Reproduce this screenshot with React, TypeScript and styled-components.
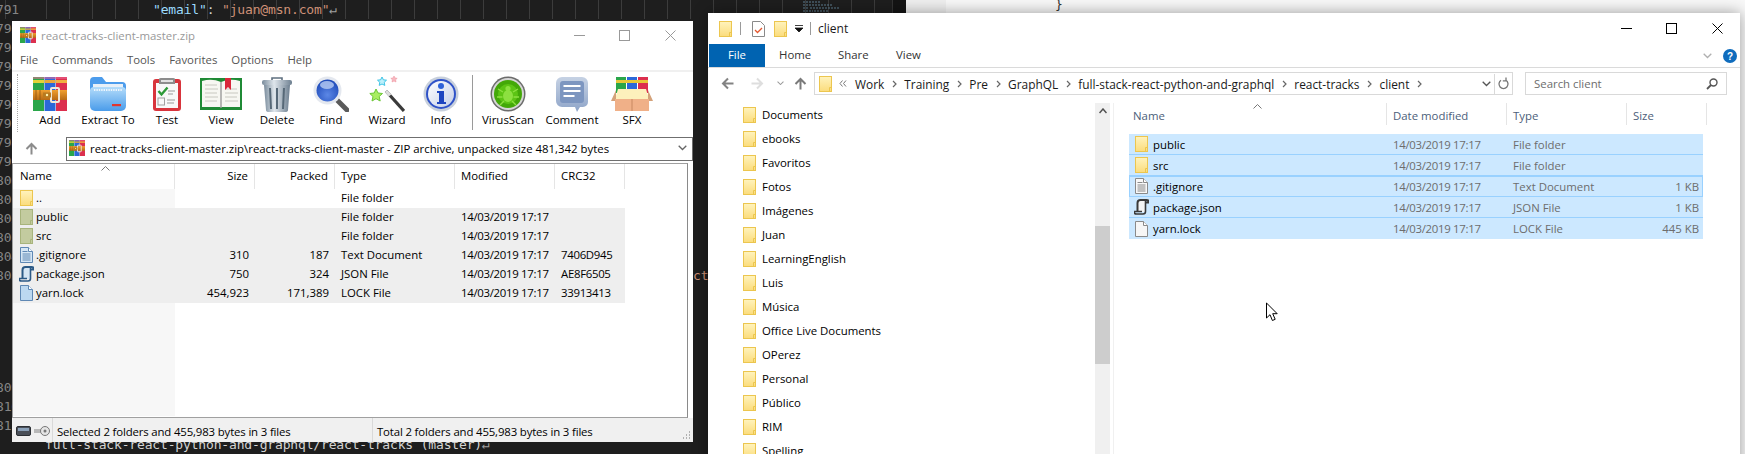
import React from "react";
import styled, { createGlobalStyle } from "styled-components";

const UI = `"Open Sans", "Noto Sans", "Liberation Sans", sans-serif`;
const MONO = `"DejaVu Sans Mono", "Liberation Mono", monospace`;

const Global = createGlobalStyle`
  html, body { margin: 0; padding: 0; background: #1e1e1e; }
  #root { width: 1745px; height: 454px; }
`;

/* ---------- desktop and the editors behind the windows ---------- */
const Desktop = styled.div`
  position: relative;
  width: 1745px;
  height: 454px;
  overflow: hidden;
  display: flex;
  font-family: ${UI};
`;
const DefsHolder = styled.svg`
  position: absolute;
`;
const DarkEditor = styled.div`
  position: relative;
  width: 892px;
  flex: none;
  background: #1e1e1e;
  display: flex;
  flex-direction: column;
  font-family: ${MONO};
  font-size: 13px;
  letter-spacing: -0.16px;
`;
const CodeRow = styled.div<{ $guides?: boolean }>`
  height: 19px;
  line-height: 19px;
  display: flex;
  white-space: pre;
  ${(p) =>
    p.$guides
      ? `background-image: repeating-linear-gradient(90deg, transparent 0, transparent 22px, #3c3c3c 22px, #3c3c3c 23px);
         background-position: 24px 0;`
      : ""}
`;
const LineNo = styled.span`
  width: 40px;
  flex: none;
  color: #858585;
  text-indent: -4px;
  overflow: hidden;
`;
const Code = styled.span<{ $indent: number; $tone?: string }>`
  margin-left: ${(p) => p.$indent}px;
  color: ${(p) => p.$tone || "#d4d4d4"};
`;
const Key = styled.span`color: #9cdcfe;`;
const Str = styled.span`color: #ce9178;`;
const Mark = styled.span`color: #a0a0a0;`;
const Minimap = styled.svg`
  position: absolute;
  left: 803px;
  top: 0;
`;
const EdgeBar = styled.div`
  width: 14px;
  flex: none;
  background: #141414;
  border-left: 1px solid #333;
  box-sizing: border-box;
`;
const LightEditor = styled.div`
  flex: 1;
  display: flex;
  background: #f8f8f8;
`;
const LightGutter = styled.div`
  width: 40px;
  background: #efefef;
`;
const Brace = styled.div`
  margin-left: 109px;
  font-family: ${MONO};
  font-size: 13px;
  line-height: 9px;
  color: #333;
`;

/* ---------- WinRAR window ---------- */
const RarWindow = styled.div`
  position: absolute;
  left: 12px;
  top: 21px;
  width: 681px;
  height: 421px;
  background: #fff;
  display: flex;
  flex-direction: column;
  font-size: 11.4px;
  color: #000;
`;
const RarTitle = styled.div`
  height: 28px;
  flex: none;
  display: flex;
  align-items: center;
  padding: 0 0 0 8px;
  gap: 5px;
  color: #999;
`;
const WinControls = styled.div`
  margin-left: auto;
  display: flex;
  align-items: center;
`;
const CtlBtn = styled.span<{ $w: number }>`
  width: ${(p) => p.$w}px;
  display: flex;
  justify-content: center;
`;
const MenuBar = styled.div`
  height: 21px;
  flex: none;
  display: flex;
  align-items: center;
  gap: 14px;
  padding-left: 8px;
  color: #555;
`;
const RarToolbar = styled.div`
  height: 62px;
  flex: none;
  border-top: 2px solid #f0f0f0;
  display: flex;
`;
const Gripper = styled.div<{ $left: number; $right: number }>`
  width: 0;
  margin: 2px ${(p) => p.$right}px 2px ${(p) => p.$left}px;
  border-left: 1px dotted #a8a8a8;
`;
const ToolBtn = styled.div<{ $w: number }>`
  width: ${(p) => p.$w}px;
  flex: none;
  display: flex;
  flex-direction: column;
  align-items: center;
  padding-top: 4px;
  white-space: nowrap;
  line-height: 16px;
  font-size: 11.5px;
`;
const ToolIcon = styled.div`
  height: 36px;
  display: flex;
  align-items: center;
`;
const ToolSep = styled.div`
  width: 1px;
  margin: 3px 9px 4px 10px;
  background: #9a9a9a;
`;
const AddressRow = styled.div`
  height: 29px;
  flex: none;
  display: flex;
  align-items: center;
`;
const UpCell = styled.div`
  width: 43px;
  margin-left: 5px;
  flex: none;
  display: flex;
  justify-content: flex-start;
  padding-left: 8px;
  box-sizing: border-box;
`;
const AddressBox = styled.div`
  flex: 1;
  margin-left: 6px;
  height: 24px;
  box-sizing: border-box;
  border: 1px solid #6f6f6f;
  display: flex;
  align-items: center;
  gap: 5px;
  padding: 0 3px 1px 2px;
  white-space: nowrap;
`;
const Chevron = styled.span`
  margin-left: auto;
  display: flex;
  padding-right: 2px;
`;
const RarList = styled.div`
  width: 676px;
  flex: 1;
  min-height: 0;
  box-sizing: border-box;
  border: 1px solid #a0a0a0;
  border-right-color: #8a8a8a;
  display: flex;
  flex-direction: column;
`;
const RarHead = styled.div`
  position: relative;
  height: 25px;
  flex: none;
  display: flex;
  align-items: stretch;
`;
const RarHeadCell = styled.div<{ $w: number; $right?: boolean; $pad?: number }>`
  width: ${(p) => p.$w}px;
  flex: none;
  box-sizing: border-box;
  border-right: 1px solid #e5e5e5;
  display: flex;
  align-items: center;
  justify-content: ${(p) => (p.$right ? "flex-end" : "flex-start")};
  padding: 0 6px 2px;
  padding-left: ${(p) => (p.$pad !== undefined ? p.$pad : 6)}px;
`;
const Caret = styled.svg<{ $x: number; $y: number }>`
  position: absolute;
  left: ${(p) => p.$x}px;
  top: ${(p) => p.$y}px;
`;
const RarBody = styled.div`
  flex: 1;
  margin-bottom: 1px;
  background: linear-gradient(90deg, #f7f7f7 162px, #fff 162px);
`;
const RarRow = styled.div<{ $sel?: boolean }>`
  width: 612px;
  height: 19px;
  display: flex;
  background: ${(p) => (p.$sel ? "#eeeeee" : "transparent")};
`;
const RarCell = styled.div<{ $w: number; $right?: boolean; $tight?: boolean }>`
  width: ${(p) => p.$w}px;
  flex: none;
  box-sizing: border-box;
  padding: 0 6px 2px;
  display: flex;
  align-items: center;
  gap: 3px;
  white-space: nowrap;
  justify-content: ${(p) => (p.$right ? "flex-end" : "flex-start")};
  ${(p) => (p.$tight ? "letter-spacing: -0.3px;" : "")}
`;
const RarNameCell = styled(RarCell)`
  padding-left: 7px;
`;
const StatusBar = styled.div`
  height: 24px;
  flex: none;
  background: #f0f0f0;
  display: flex;
  align-items: center;
`;
const StatusCell = styled.div<{ $w: number; $last?: boolean }>`
  width: ${(p) => p.$w}px;
  flex: none;
  box-sizing: border-box;
  height: 100%;
  display: flex;
  align-items: center;
  gap: 3px;
  padding: 2px 0 0 4px;
  border-right: ${(p) => (p.$last ? "none" : "1px solid #d9d9d9")};
  white-space: nowrap;
  letter-spacing: -0.15px;
`;
const Grip = styled.svg`
  margin-left: auto;
  align-self: flex-end;
  margin-right: 2px;
  margin-bottom: 2px;
`;

/* ---------- Explorer window ---------- */
const ExpWindow = styled.div`
  position: absolute;
  left: 708px;
  top: 13px;
  width: 1032px;
  height: 460px;
  background: #fff;
  box-shadow: 0 0 14px rgba(0, 0, 0, 0.38);
  display: flex;
  flex-direction: column;
  font-size: 11.4px;
  color: #000;
`;
const ExpTitle = styled.div`
  height: 31px;
  flex: none;
  display: flex;
  align-items: center;
  padding-left: 11px;
`;
const TitleSep = styled.span<{ $l: number; $r: number }>`
  width: 1px;
  height: 13px;
  background: #9a9a9a;
  margin: 0 ${(p) => p.$r}px 0 ${(p) => p.$l}px;
`;
const TitleGap = styled.span`
  width: 9px;
`;
const TitleText = styled.span`
  color: #1a1a1a;
  font-size: 12px;
`;
const QuickArrow = styled.svg`
  margin-left: 8px;
`;
const RibbonTabs = styled.div`
  height: 24px;
  flex: none;
  box-sizing: border-box;
  display: flex;
  align-items: stretch;
  padding-left: 1px;
  border-bottom: 1px solid #dadada;
`;
const FileTab = styled.div`
  width: 56px;
  display: flex;
  align-items: center;
  justify-content: center;
  padding-bottom: 2px;
  box-sizing: border-box;
  background: #0063b1;
  color: #fff;
`;
const RibbonTab = styled.div<{ $w: number; $pad: number }>`
  width: ${(p) => p.$w}px;
  padding: 0 0 2px ${(p) => p.$pad}px;
  box-sizing: border-box;
  display: flex;
  align-items: center;
  color: #333;
`;
const RibbonRight = styled.div`
  margin-left: auto;
  display: flex;
  align-items: center;
  gap: 11px;
  padding-right: 3px;
`;
const NavRow = styled.div`
  height: 35px;
  flex: none;
  display: flex;
  align-items: center;
  padding: 0 12px 5px 13px;
  box-sizing: border-box;
`;
const NavBtn = styled.span<{ $gap: number }>`
  display: flex;
  margin-right: ${(p) => p.$gap}px;
`;
const Breadcrumb = styled.div`
  width: 699px;
  height: 23px;
  box-sizing: border-box;
  border: 1px solid #d9d9d9;
  display: flex;
  align-items: center;
  padding: 1px 0 0 4px;
  white-space: nowrap;
  color: #1a1a1a;
  font-size: 11.9px;
`;
const CrumbSep = styled.span<{ $l?: number; $r?: number }>`
  display: flex;
  margin: 0 ${(p) => p.$r ?? 7.5}px 0 ${(p) => p.$l ?? 7.5}px;
`;
const CrumbEnd = styled.div`
  margin-left: auto;
  display: flex;
  align-items: center;
  height: 100%;
`;
const CrumbRefresh = styled.span`
  height: 100%;
  width: 17px;
  margin-left: 3px;
  border-left: 1px solid #d9d9d9;
  display: flex;
  align-items: center;
  justify-content: center;
`;
const SearchBox = styled.div`
  margin-left: 12px;
  width: 202px;
  height: 23px;
  box-sizing: border-box;
  border: 1px solid #d9d9d9;
  display: flex;
  align-items: center;
  justify-content: space-between;
  padding: 1px 8px 0;
  color: #6d6d6d;
`;
const ExpBody = styled.div`
  flex: 1;
  min-height: 0;
  display: flex;
`;
const Tree = styled.div`
  width: 387px;
  flex: none;
  padding-left: 35px;
  box-sizing: border-box;
  overflow: hidden;
`;
const TreeRow = styled.div`
  height: 24px;
  display: flex;
  align-items: center;
  gap: 6px;
  white-space: nowrap;
  padding-bottom: 1px;
  box-sizing: border-box;
`;
const ScrollTrack = styled.div`
  width: 15px;
  flex: none;
  background: #f0f0f0;
  display: flex;
  flex-direction: column;
  align-items: center;
`;
const ScrollArrow = styled.svg`
  margin-top: 5px;
  margin-bottom: 6px;
  flex: none;
`;
const ScrollThumb = styled.div`
  width: 100%;
  height: 138px;
  margin-top: 106px;
  background: #cdcdcd;
`;
const FilePane = styled.div`
  flex: 1;
  margin-left: 3px;
  border-left: 1px solid #f0f0f0;
`;
const ExpHead = styled.div`
  position: relative;
  height: 22px;
  margin-left: 13px;
  display: flex;
  color: #4c607a;
`;
const ExpHeadCell = styled.div<{ $w: number }>`
  width: ${(p) => p.$w}px;
  flex: none;
  box-sizing: border-box;
  border-right: 1px solid #e5e5e5;
  padding: 3px 0 0 6px;
  display: flex;
  align-items: center;
`;
const ExpRows = styled.div`
  margin: 9px 0 0 15px;
  width: 574px;
`;
const ExpRow = styled.div<{ $focus?: boolean; $last?: boolean }>`
  height: 21px;
  box-sizing: border-box;
  background: #cce8ff;
  display: flex;
  border-bottom: ${(p) => (p.$last ? "none" : "1px solid #99d1ff")};
  ${(p) => (p.$focus ? "outline: 1px solid #99d1ff; outline-offset: -1px;" : "")}
`;
const ExpName = styled.div`
  width: 258px;
  flex: none;
  box-sizing: border-box;
  display: flex;
  align-items: center;
  gap: 5px;
  padding-left: 6px;
  white-space: nowrap;
`;
const ExpCol = styled.div<{ $w: number; $right?: boolean; $tight?: boolean }>`
  width: ${(p) => p.$w}px;
  flex: none;
  box-sizing: border-box;
  padding: 0 4px 0 6px;
  display: flex;
  align-items: center;
  white-space: nowrap;
  color: #6d6d6d;
  justify-content: ${(p) => (p.$right ? "flex-end" : "flex-start")};
  ${(p) => (p.$tight ? "letter-spacing: -0.3px;" : "")}
`;
const Pointer = styled.svg`
  position: absolute;
  left: 1265px;
  top: 302px;
`;
const IconSvg = styled.svg<{ $nudge?: boolean }>`
  flex: none;
  ${(p) => (p.$nudge ? "margin-left: -1px; margin-right: -1px;" : "")}
`;
const TurnSvg = styled.svg<{ $turn: number }>`
  transform: rotate(${(p) => p.$turn}deg);
`;

/* ---------- drawings ---------- */
const Folder = ({ dim }: { dim?: boolean }) => (
  <IconSvg width="13" height="16" viewBox="0 0 13 16">
    <rect x=".5" y=".5" width="12" height="15" fill={dim ? "#c3cb9f" : "url(#fy)"} stroke={dim ? "#a8b47c" : "#ecc64f"} />
    <path d="M10.5 15.5v-4h2" fill="none" stroke={dim ? "#a8b47c" : "#ecc64f"} />
  </IconSvg>
);
const RarLogo = ({ size = 34 }: { size?: number }) => (
  <svg width={size} height={size} viewBox="0 0 34 34">
    <rect x="0" y="0" width="11" height="34" fill="#2aa64a" />
    <rect x="11.5" y="0" width="11" height="34" fill="#2b68d8" />
    <rect x="23" y="0" width="11" height="34" fill="#dc2f4e" />
    <rect x="0" y="3" width="11" height="3" fill="#e4d238" />
    <rect x="11.5" y="3" width="11" height="3" fill="#e8a73a" />
    <rect x="23" y="3" width="11" height="3" fill="#f0b040" />
    <rect x="0" y="0" width="34" height="2" fill="#e96a96" opacity=".55" />
    <rect x="-1" y="13" width="36" height="10" fill="url(#belt)" />
    <path d="M3 13v10M7 13v10" stroke="#8c5410" strokeWidth=".8" />
    <rect x="18" y="11" width="8" height="14" rx="1" fill="none" stroke="#efe8d8" strokeWidth="2" />
    <rect x="10" y="15.5" width="8" height="5" fill="#b87a20" />
    <circle cx="14" cy="18" r="1.2" fill="#fff4b0" />
  </svg>
);
const ExtractIcon = () => (
  <svg width="36" height="34" viewBox="0 0 36 34">
    <path d="M0 4a4 4 0 0 1 4-4h8l4 5h16a4 4 0 0 1 4 4v4H0z" fill="#4c9cec" />
    <rect x="3" y="7" width="30" height="5" fill="#e8f0f8" />
    <path d="M0 14q0-4 4-4h28q4 0 4 4v15a5 5 0 0 1-5 5H5a5 5 0 0 1-5-5z" fill="url(#fb)" />
    <path d="M4 13h28" stroke="#ffffff" strokeWidth="2" strokeDasharray="1.4 1" opacity=".8" />
    <rect x="22" y="27" width="9" height="2.2" fill="#e2362e" />
  </svg>
);
const TestIcon = () => (
  <svg width="28" height="33" viewBox="0 0 28 33">
    <rect x="0" y="1" width="28" height="32" rx="3" fill="#d8343c" />
    <rect x="3" y="5" width="22" height="25" fill="#f8f8f8" />
    <path d="M6 1q0-1 2-1h12q2 0 2 1v5H6z" fill="#8d8d8d" />
    <rect x="8" y="2" width="12" height="2" fill="#e2e2e2" />
    <path d="M5.5 13l3 3.5 6-7" fill="none" stroke="#2d9a38" strokeWidth="2.4" />
    <rect x="5" y="20" width="6.5" height="7" fill="none" stroke="#a0a0a0" />
    <path d="M15 13h7M15 16h5M14 22h8M14 25h7" stroke="#999" strokeWidth="1.2" />
  </svg>
);
const ViewIcon = () => (
  <svg width="42" height="32" viewBox="0 0 42 32">
    <rect x="0" y="0" width="42" height="32" fill="#1f8a35" />
    <path d="M2 3q10-3 19 1q9-4 19-1v26H2z" fill="#f7f7f2" />
    <path d="M21 4v26" stroke="#9a9a9a" strokeWidth="1.4" />
    <path d="M5 7h12M5 11h13M5 15h12M5 19h13M5 23h12M25 11h12M25 15h13M25 19h12M25 23h13" stroke="#c8c8c0" />
    <path d="M25 0h6v12l-3-3-3 3z" fill="#d8283a" />
  </svg>
);
const TrashIcon = () => (
  <svg width="30" height="35" viewBox="0 0 30 35">
    <path d="M10 3V1h10v2" fill="none" stroke="#5f7080" strokeWidth="1.6" />
    <rect x="0" y="3" width="30" height="5" rx="2" fill="url(#tg)" />
    <path d="M2 8h26l-2 25q0 2-3 2H7q-3 0-3-2z" fill="url(#tg)" />
    <path d="M8 11l1 21M15 11v21M22 11l-1 21" stroke="#566877" strokeWidth="2" />
  </svg>
);
const FindIcon = () => (
  <svg width="36" height="36" viewBox="0 0 36 36">
    <path d="M24 24l10 10" stroke="#5a5a5a" strokeWidth="5" strokeLinecap="round" />
    <circle cx="14.5" cy="14.5" r="14" fill="#e4e8ef" />
    <circle cx="14.5" cy="14.5" r="11" fill="url(#fd)" />
    <ellipse cx="14" cy="9" rx="7" ry="4" fill="#b9cdf4" opacity=".8" />
  </svg>
);
const WizardIcon = () => (
  <svg width="36" height="36" viewBox="0 0 36 36">
    <path d="M17 15l18 20" stroke="#3a3a3a" strokeWidth="3.2" />
    <path d="M17 15l4 4.5" stroke="#dddddd" strokeWidth="3.2" />
    <path d="M7 13l2 4 4.5.5-3.3 3 1 4.5L7 22.7 3 25l1-4.5-3.2-3 4.4-.5z" fill="#a8ee60" stroke="#6cc638" />
    <path d="M13 1l1.4 2.8 3.1.4-2.3 2.1.6 3.1L13 8l-2.8 1.4.6-3.1-2.3-2.1 3.1-.4z" fill="#bdf0fb" stroke="#3ec4e6" />
    <path d="M25 0l1 2 2.2.3-1.6 1.5.4 2.2-2-1-2 1 .4-2.2-1.6-1.5 2.2-.3z" fill="#f7b8c0" stroke="#ec8c98" strokeWidth=".5" />
  </svg>
);
const InfoIcon = () => (
  <svg width="36" height="36" viewBox="0 0 36 36">
    <circle cx="18" cy="18" r="17.5" fill="#c8d0dc" />
    <circle cx="18" cy="18" r="15" fill="#2f52c8" />
    <circle cx="18" cy="18" r="13" fill="url(#ig)" />
    <circle cx="18" cy="10" r="3" fill="#2f62d8" />
    <path d="M14 15h7v11h2v2h-9v-2h2v-9h-2z" fill="#1e45c0" />
  </svg>
);
const VirusIcon = () => (
  <svg width="36" height="36" viewBox="0 0 36 36">
    <circle cx="18" cy="18" r="17.5" fill="#6c6c6c" />
    <circle cx="18" cy="18" r="16" fill="#d6d6d6" />
    <circle cx="18" cy="18" r="14" fill="#43a808" />
    <circle cx="18" cy="18" r="10" fill="#5cc414" />
    <ellipse cx="18" cy="20" rx="5" ry="6" fill="#8ce040" />
    <circle cx="18" cy="12.5" r="2.6" fill="#8ce040" />
    <path d="M13 16l-5-3M23 16l5-3M12.5 21H7M23.5 21H29M14 25l-4 4M22 25l4 4" stroke="#8ce040" strokeWidth="1.4" />
  </svg>
);
const CommentIcon = () => (
  <svg width="32" height="36" viewBox="0 0 32 36">
    <path d="M6 1h20a6 6 0 0 1 6 6v19a5 5 0 0 1-5 5h-3l-3 5-2-5H6a6 6 0 0 1-6-6V7a6 6 0 0 1 6-6z" fill="url(#cg)" />
    <rect x="4" y="5" width="24" height="22" rx="3" fill="#7d96c0" />
    <path d="M7.500 10h17M7.500 15h17M7.500 20h11" stroke="#fff" strokeWidth="1.8" />
  </svg>
);
const SfxIcon = () => (
  <svg width="42" height="34" viewBox="0 0 42 34">
    <rect x="5" y="0" width="10" height="16" fill="#2aa64a" />
    <rect x="16" y="0" width="10" height="16" fill="#2b68d8" />
    <rect x="27" y="0" width="10" height="16" fill="#dc2f4e" />
    <rect x="5" y="3" width="32" height="3" fill="#e8c838" />
    <path d="M7 12h28l3 10H4z" fill="#fdf0bc" />
    <path d="M5 13L0 24h5zM37 13l5 11h-5z" fill="#d4a27a" />
    <path d="M4 22h34v12H4z" fill="#f0b088" />
    <path d="M21 22v12" stroke="#c88860" />
  </svg>
);
const DocIcon = ({ tone }: { tone: "blue" | "gray" }) => {
  const line = tone === "blue" ? "#5f88b4" : "#8a8a8a";
  const fill = tone === "blue" ? "#d6e6f4" : "#f8f8f8";
  return (
    <IconSvg width="13" height="16" viewBox="0 0 13 16">
      <path d="M.5.5h8l4 4v11H.5z" fill={fill} stroke={line} />
      <path d="M8.5.5v4h4" fill="#fff" stroke={line} />
      <path d="M2.500 4.500h5M2.500 7h8M2.500 9h8M2.500 11h8M2.500 13h8" stroke={line} />
    </IconSvg>
  );
};
const PlainIcon = ({ tone }: { tone: "blue" | "gray" }) => {
  const line = tone === "blue" ? "#5f88b4" : "#8a8a8a";
  const fill = tone === "blue" ? "#bcd8f0" : "#f6f6f6";
  return (
    <IconSvg width="13" height="16" viewBox="0 0 13 16">
      <path d="M.5.5h8l4 4v11H.5z" fill={fill} stroke={line} />
      <path d="M8.5.5v4h4" fill="#fff" stroke={line} />
    </IconSvg>
  );
};
const JsonIcon = ({ tone, paper }: { tone: string; paper: string }) => (
  <IconSvg $nudge width="15" height="16" viewBox="0 0 15 16">
    <rect x="4" y="2" width="8" height="11" fill={paper} />
    <path d="M3.500 13V4q0-3 3-3h6q2.500 0 2.500 2.500h-3" fill="none" stroke={tone} strokeWidth="2" />
    <path d="M11.500 2v10.500q0 2.500-2.500 2.500H2.500Q0 15 0 12.500h8" fill="none" stroke={tone} strokeWidth="1.600" />
  </IconSvg>
);
const DriveIcon = () => (
  <svg width="15" height="10" viewBox="0 0 15 10">
    <rect x=".5" y=".5" width="14" height="9" rx="1.500" fill="#4a4f58" stroke="#2c2f34" />
    <rect x="2" y="2" width="11" height="3" fill="#8aa0b8" />
  </svg>
);
const KeysIcon = () => (
  <svg width="16" height="12" viewBox="0 0 16 12">
    <path d="M0 4h8v4H0z" fill="#b8b8b8" />
    <circle cx="11" cy="6" r="4.500" fill="#e4e4e4" stroke="#777" />
    <circle cx="11" cy="6" r="1.500" fill="#777" />
  </svg>
);
const Arrow = ({ dir, color = "#838383", w = 13 }: { dir: "left" | "right" | "up"; color?: string; w?: number }) => (
  <TurnSvg $turn={dir === "left" ? 0 : dir === "right" ? 180 : 90} width={w} height={w} viewBox="0 0 13 13">
    <path d="M12.500 6.500H2M7 1.500l-5 5 5 5" fill="none" stroke={color} strokeWidth="2" />
  </TurnSvg>
);
const ChevDown = ({ color = "#666", w = 9 }: { color?: string; w?: number }) => (
  <svg width={w} height={(w * 6) / 9} viewBox="0 0 9 6">
    <path d="M.7.7l3.800 3.800L8.300.7" fill="none" stroke={color} strokeWidth="1.300" />
  </svg>
);
const ChevRight = () => (
  <svg width="5" height="8" viewBox="0 0 5 8">
    <path d="M1 1l3 3-3 3" fill="none" stroke="#666" strokeWidth="1.200" />
  </svg>
);

const columns = { name: 162, size: 80, packed: 80, type: 120, mod: 100, crc: 70 };

const tools: { label: string; w: number; icon: React.ReactNode }[] = [
  { label: "Add", w: 56, icon: <RarLogo /> },
  { label: "Extract To", w: 60, icon: <ExtractIcon /> },
  { label: "Test", w: 58, icon: <TestIcon /> },
  { label: "View", w: 50, icon: <ViewIcon /> },
  { label: "Delete", w: 62, icon: <TrashIcon /> },
  { label: "Find", w: 46, icon: <FindIcon /> },
  { label: "Wizard", w: 66, icon: <WizardIcon /> },
  { label: "Info", w: 42, icon: <InfoIcon /> },
];
const tools2: { label: string; w: number; icon: React.ReactNode }[] = [
  { label: "VirusScan", w: 52, icon: <VirusIcon /> },
  { label: "Comment", w: 76, icon: <CommentIcon /> },
  { label: "SFX", w: 44, icon: <SfxIcon /> },
];

const D = "14/03/2019 17:17";
const rarRows = [
  { icon: <Folder />, name: "..", type: "File folder" },
  { sel: true, icon: <Folder dim />, name: "public", type: "File folder", mod: D },
  { sel: true, icon: <Folder dim />, name: "src", type: "File folder", mod: D },
  { sel: true, icon: <DocIcon tone="blue" />, name: ".gitignore", size: "310", packed: "187", type: "Text Document", mod: D, crc: "7406D945" },
  { sel: true, icon: <JsonIcon tone="#2c5a86" paper="#d6e6f4" />, name: "package.json", size: "750", packed: "324", type: "JSON File", mod: D, crc: "AE8F6505" },
  { sel: true, icon: <PlainIcon tone="blue" />, name: "yarn.lock", size: "454,923", packed: "171,389", type: "LOCK File", mod: D, crc: "33913413" },
];
const expRows = [
  { icon: <Folder />, name: "public", type: "File folder" },
  { icon: <Folder />, name: "src", type: "File folder" },
  { icon: <DocIcon tone="gray" />, name: ".gitignore", type: "Text Document", size: "1 KB", focus: true },
  { icon: <JsonIcon tone="#3a3a3a" paper="#f4f4f4" />, name: "package.json", type: "JSON File", size: "1 KB" },
  { icon: <PlainIcon tone="gray" />, name: "yarn.lock", type: "LOCK File", size: "445 KB" },
];
const treeItems = [
  "Documents", "ebooks", "Favoritos", "Fotos", "Imágenes", "Juan", "LearningEnglish", "Luis", "Música",
  "Office Live Documents", "OPerez", "Personal", "Público", "RIM", "Spelling",
];
const crumbs = ["Work", "Training", "Pre", "GraphQL", "full-stack-react-python-and-graphql", "react-tracks", "client"];
const lineNumbers = [
  "791", "792", "793", "794", "795", "796", "797", "798", "799",
  "800", "801", "802", "803", "804", "805", "", "", "", "", "", "809", "810", "811", "",
];

export default function App() {
  return (
    <Desktop>
      <Global />
      <DefsHolder width="0" height="0">
        <defs>
          <linearGradient id="fy" x1="0" y1="0" x2="0" y2="1">
            <stop offset="0" stopColor="#fff3bd" />
            <stop offset="1" stopColor="#fbdc7c" />
          </linearGradient>
          <linearGradient id="fb" x1="0" y1="0" x2="0" y2="1">
            <stop offset="0" stopColor="#b4dcfa" />
            <stop offset="1" stopColor="#4a9cea" />
          </linearGradient>
          <linearGradient id="belt" x1="0" y1="0" x2="0" y2="1">
            <stop offset="0" stopColor="#f0a030" />
            <stop offset="1" stopColor="#b86a14" />
          </linearGradient>
          <linearGradient id="tg" x1="0" y1="0" x2="1" y2="0">
            <stop offset="0" stopColor="#7a8c9c" />
            <stop offset=".4" stopColor="#dfe6ec" />
            <stop offset="1" stopColor="#6d7f90" />
          </linearGradient>
          <radialGradient id="fd" cx=".5" cy=".7" r=".7">
            <stop offset="0" stopColor="#5c88e6" />
            <stop offset="1" stopColor="#1d49b8" />
          </radialGradient>
          <linearGradient id="ig" x1="0" y1="0" x2="1" y2="1">
            <stop offset="0" stopColor="#ffffff" />
            <stop offset="1" stopColor="#c4cee8" />
          </linearGradient>
          <linearGradient id="cg" x1="0" y1="0" x2="0" y2="1">
            <stop offset="0" stopColor="#c6d2e4" />
            <stop offset="1" stopColor="#8ea4c8" />
          </linearGradient>
        </defs>
      </DefsHolder>

      <DarkEditor>
        {lineNumbers.map((n, i) => (
          <CodeRow key={i} $guides={i === 0}>
            <LineNo>{n}</LineNo>
            {i === 0 && (
              <Code $indent={113}>
                <Key>"email"</Key>: <Str>"juan@msn.com"</Str>
                <Mark>↵</Mark>
              </Code>
            )}
            {i === 14 && (
              <Code $indent={653} $tone="#ce9178">
                ct
              </Code>
            )}
            {i === 23 && (
              <Code $indent={5}>
                full-stack-react-python-and-graphql/react-tracks (master)<Mark>↵</Mark>
              </Code>
            )}
          </CodeRow>
        ))}
        <Minimap width="48" height="13" viewBox="0 0 48 13">
          <path d="M0 2h5M6 2h12M0 5h8M9 5h20M0 8h6M7 8h30M0 11h10M11 11h14" stroke="#5f7f92" strokeWidth="1.200" strokeDasharray="2 1" />
        </Minimap>
      </DarkEditor>
      <EdgeBar />
      <LightEditor>
        <LightGutter />
        <Brace>{"}"}</Brace>
      </LightEditor>

      <RarWindow>
        <RarTitle>
          <RarLogo size={16} />
          <span>react-tracks-client-master.zip</span>
          <WinControls>
            <CtlBtn $w={46}>
              <svg width="11" height="11" viewBox="0 0 11 11"><path d="M0 5.500h11" stroke="#999" /></svg>
            </CtlBtn>
            <CtlBtn $w={45}>
              <svg width="11" height="11" viewBox="0 0 11 11"><rect x=".5" y=".5" width="10" height="10" fill="none" stroke="#999" /></svg>
            </CtlBtn>
            <CtlBtn $w={46}>
              <svg width="11" height="11" viewBox="0 0 11 11"><path d="M.5.500l10 10M10.500.500l-10 10" stroke="#999" /></svg>
            </CtlBtn>
          </WinControls>
        </RarTitle>
        <MenuBar>
          <span>File</span>
          <span>Commands</span>
          <span>Tools</span>
          <span>Favorites</span>
          <span>Options</span>
          <span>Help</span>
        </MenuBar>
        <RarToolbar>
          <Gripper $left={5} $right={4} />
          {tools.map((t) => (
            <ToolBtn key={t.label} $w={t.w}>
              <ToolIcon>{t.icon}</ToolIcon>
              {t.label}
            </ToolBtn>
          ))}
          <ToolSep />
          {tools2.map((t) => (
            <ToolBtn key={t.label} $w={t.w}>
              <ToolIcon>{t.icon}</ToolIcon>
              {t.label}
            </ToolBtn>
          ))}
        </RarToolbar>
        <AddressRow>
          <UpCell>
            <Arrow dir="up" color="#8c8c8c" />
          </UpCell>
          <AddressBox>
            <RarLogo size={16} />
            react-tracks-client-master.zip\react-tracks-client-master - ZIP archive, unpacked size 481,342 bytes
            <Chevron>
              <ChevDown />
            </Chevron>
          </AddressBox>
        </AddressRow>
        <RarList>
          <RarHead>
            <RarHeadCell $w={columns.name} $pad={7}>Name</RarHeadCell>
            <RarHeadCell $w={columns.size} $right>Size</RarHeadCell>
            <RarHeadCell $w={columns.packed} $right>Packed</RarHeadCell>
            <RarHeadCell $w={columns.type}>Type</RarHeadCell>
            <RarHeadCell $w={columns.mod}>Modified</RarHeadCell>
            <RarHeadCell $w={columns.crc}>CRC32</RarHeadCell>
            <Caret $x={88} $y={2} width="9" height="5" viewBox="0 0 9 5">
              <path d="M.5 4.500l4-4 4 4" fill="none" stroke="#777" />
            </Caret>
          </RarHead>
          <RarBody>
            {rarRows.map((r) => (
              <RarRow key={r.name} $sel={r.sel}>
                <RarNameCell $w={columns.name}>
                  {r.icon}
                  {r.name}
                </RarNameCell>
                <RarCell $w={columns.size} $right>{r.size}</RarCell>
                <RarCell $w={columns.packed} $right>{r.packed}</RarCell>
                <RarCell $w={columns.type}>{r.type}</RarCell>
                <RarCell $w={columns.mod} $tight>{r.mod}</RarCell>
                <RarCell $w={columns.crc} $tight>{r.crc}</RarCell>
              </RarRow>
            ))}
          </RarBody>
        </RarList>
        <StatusBar>
          <StatusCell $w={41}>
            <DriveIcon />
            <KeysIcon />
          </StatusCell>
          <StatusCell $w={320}>Selected 2 folders and 455,983 bytes in 3 files</StatusCell>
          <StatusCell $w={300} $last>Total 2 folders and 455,983 bytes in 3 files</StatusCell>
          <Grip width="10" height="10" viewBox="0 0 10 10">
            <path d="M8 2h1M5 5h1M8 5h1M2 8h1M5 8h1M8 8h1" stroke="#b0b0b0" strokeWidth="2" />
          </Grip>
        </StatusBar>
      </RarWindow>

      <ExpWindow>
        <ExpTitle>
          <Folder />
          <TitleSep $l={8} $r={11} />
          <svg width="13" height="16" viewBox="0 0 13 16">
            <path d="M.5.500h8l4 4v11H.5z" fill="#fff" stroke="#8a8a8a" />
            <path d="M3 9l2.500 2.500L10 7" fill="none" stroke="#e4572e" strokeWidth="1.300" />
          </svg>
          <TitleGap />
          <Folder />
          <QuickArrow width="8" height="7" viewBox="0 0 8 7">
            <path d="M0 .5h8M0 3h8l-4 4z" stroke="#111" strokeWidth=".8" fill="#111" />
          </QuickArrow>
          <TitleSep $l={7} $r={7} />
          <TitleText>client</TitleText>
          <WinControls>
            <CtlBtn $w={46}>
              <svg width="11" height="11" viewBox="0 0 11 11"><path d="M0 5.500h11" stroke="#000" /></svg>
            </CtlBtn>
            <CtlBtn $w={45}>
              <svg width="11" height="11" viewBox="0 0 11 11"><rect x=".5" y=".5" width="10" height="10" fill="none" stroke="#000" /></svg>
            </CtlBtn>
            <CtlBtn $w={46}>
              <svg width="11" height="11" viewBox="0 0 11 11"><path d="M.5.500l10 10M10.500.500l-10 10" stroke="#000" /></svg>
            </CtlBtn>
          </WinControls>
        </ExpTitle>
        <RibbonTabs>
          <FileTab>File</FileTab>
          <RibbonTab $w={59} $pad={14}>Home</RibbonTab>
          <RibbonTab $w={58} $pad={14}>Share</RibbonTab>
          <RibbonTab $w={50} $pad={14}>View</RibbonTab>
          <RibbonRight>
            <ChevDown color="#b0b0b0" w={9} />
            <svg width="14" height="14" viewBox="0 0 14 14">
              <circle cx="7" cy="7" r="7" fill="#0f6cbd" />
              <text x="7" y="10.500" textAnchor="middle" fontSize="10" fontWeight="700" fill="#fff" fontFamily="Liberation Sans, sans-serif">?</text>
            </svg>
          </RibbonRight>
        </RibbonTabs>
        <NavRow>
          <NavBtn $gap={17}><Arrow dir="left" /></NavBtn>
          <NavBtn $gap={13}><Arrow dir="right" color="#dedede" /></NavBtn>
          <NavBtn $gap={10}><ChevDown color="#999" w={7} /></NavBtn>
          <NavBtn $gap={7}><Arrow dir="up" color="#7a7a7a" /></NavBtn>
          <Breadcrumb>
            <Folder />
            <CrumbSep $l={7} $r={8}>
              <svg width="8" height="7" viewBox="0 0 8 7"><path d="M3.500.5L1 3.500l2.500 3M7 .5L4.500 3.500 7 6.500" fill="none" stroke="#777" /></svg>
            </CrumbSep>
            {crumbs.map((c) => (
              <React.Fragment key={c}>
                {c}
                <CrumbSep><ChevRight /></CrumbSep>
              </React.Fragment>
            ))}
            <CrumbEnd>
              <ChevDown color="#555" />
              <CrumbRefresh>
                <svg width="11" height="13" viewBox="0 0 11 13">
                  <path d="M3 3.300A4.500 4.500 0 1 0 8 3.300M8 .5v3.300H4.800" fill="none" stroke="#777" strokeWidth="1.300" />
                </svg>
              </CrumbRefresh>
            </CrumbEnd>
          </Breadcrumb>
          <SearchBox>
            Search client
            <svg width="12" height="12" viewBox="0 0 12 12">
              <circle cx="7.500" cy="4.500" r="3.500" fill="none" stroke="#555" strokeWidth="1.400" />
              <path d="M5 7l-4 4" stroke="#555" strokeWidth="1.800" />
            </svg>
          </SearchBox>
        </NavRow>
        <ExpBody>
          <Tree>
            {treeItems.map((t) => (
              <TreeRow key={t}>
                <Folder />
                {t}
              </TreeRow>
            ))}
          </Tree>
          <ScrollTrack>
            <ScrollArrow width="8" height="6" viewBox="0 0 8 6">
              <path d="M.5 5L4 1l3.500 4" fill="none" stroke="#505050" strokeWidth="1.500" />
            </ScrollArrow>
            <ScrollThumb />
          </ScrollTrack>
          <FilePane>
            <ExpHead>
              <ExpHeadCell $w={260}>Name</ExpHeadCell>
              <ExpHeadCell $w={120}>Date modified</ExpHeadCell>
              <ExpHeadCell $w={120}>Type</ExpHeadCell>
              <ExpHeadCell $w={80}>Size</ExpHeadCell>
              <Caret $x={126} $y={1} width="9" height="5" viewBox="0 0 9 5">
                <path d="M.5 4.500l4-4 4 4" fill="none" stroke="#777" />
              </Caret>
            </ExpHead>
            <ExpRows>
              {expRows.map((r, i) => (
                <ExpRow key={r.name} $focus={r.focus} $last={i === expRows.length - 1}>
                  <ExpName>
                    {r.icon}
                    {r.name}
                  </ExpName>
                  <ExpCol $w={120} $tight>{D}</ExpCol>
                  <ExpCol $w={120}>{r.type}</ExpCol>
                  <ExpCol $w={76} $right>{r.size}</ExpCol>
                </ExpRow>
              ))}
            </ExpRows>
          </FilePane>
        </ExpBody>
      </ExpWindow>

      <Pointer width="13" height="20" viewBox="0 0 13 20">
        <path d="M1.500 1v15l3.500-3.300 2.400 5.800 2.800-1.200-2.500-5.600h4.500z" fill="#fff" stroke="#000" />
      </Pointer>
    </Desktop>
  );
}
